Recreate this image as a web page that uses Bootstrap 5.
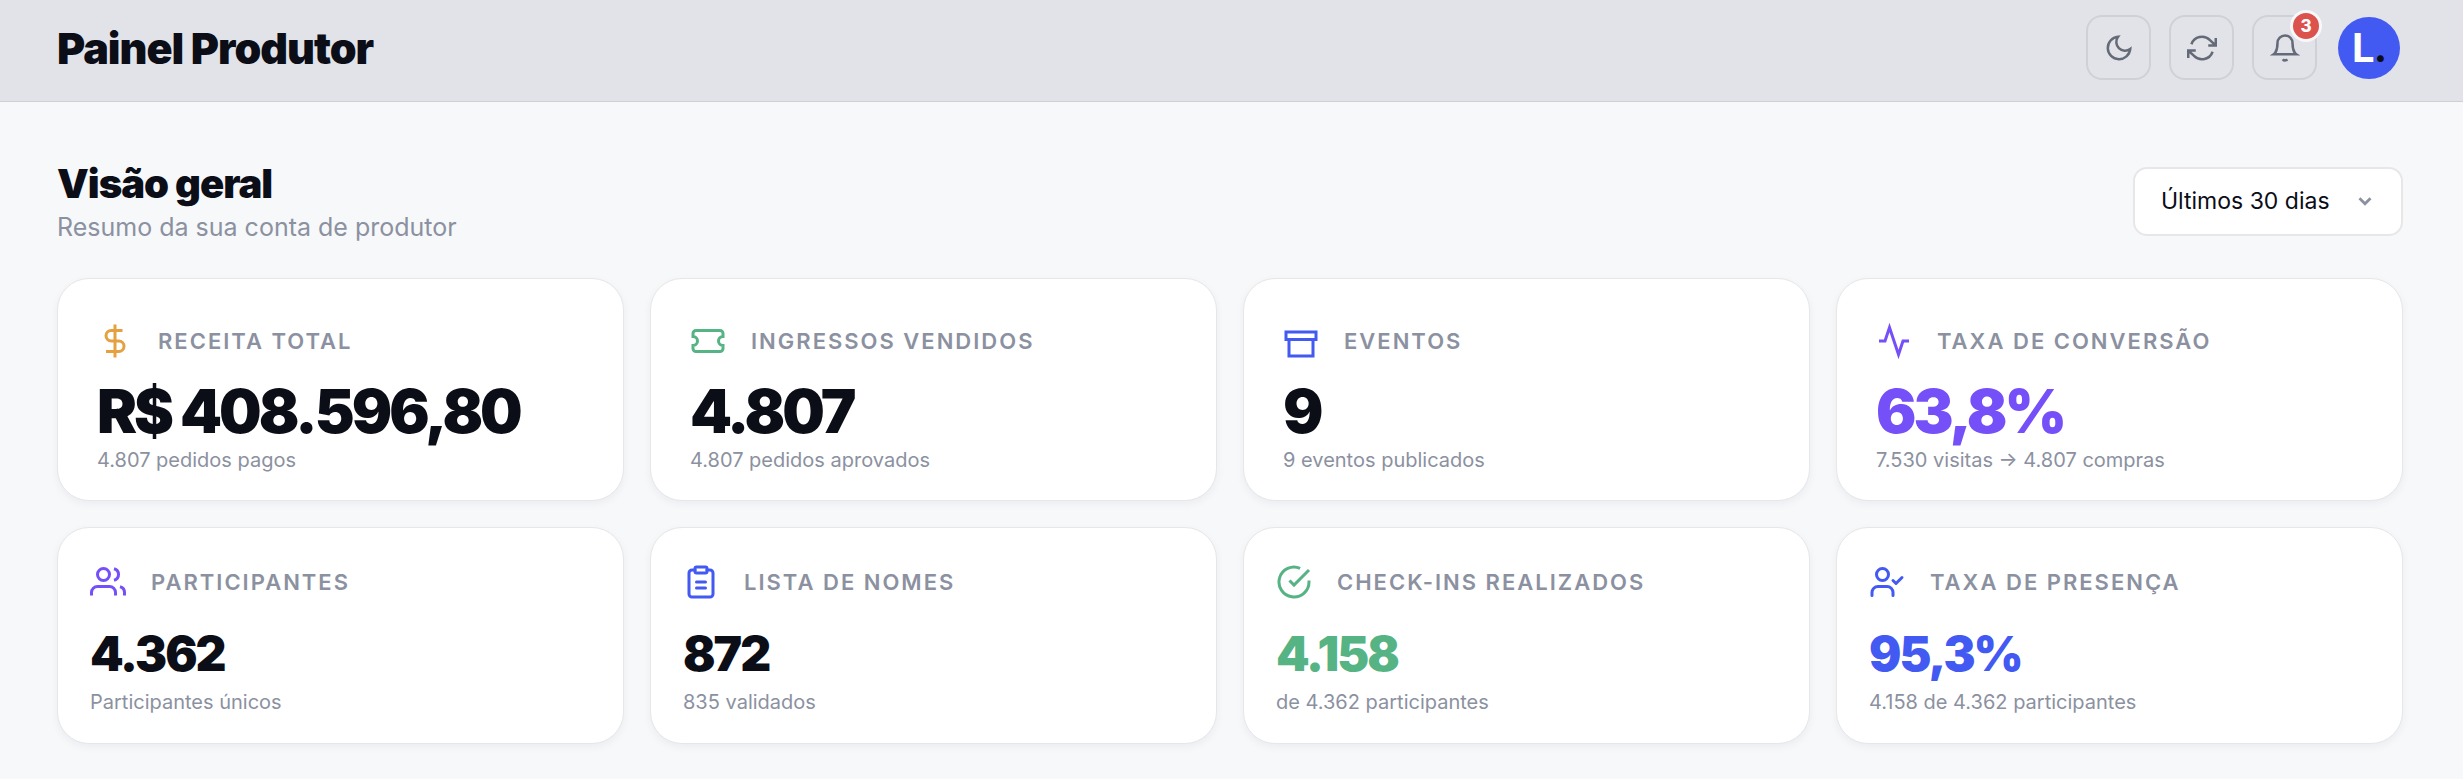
<!DOCTYPE html>
<html lang="pt-BR">
<head>
<meta charset="utf-8">
<meta name="viewport" content="width=device-width, initial-scale=1">
<title>Painel Produtor</title>
<link href="https://cdn.jsdelivr.net/npm/bootstrap@5.3.0/dist/css/bootstrap.min.css" rel="stylesheet">
<style>
:root{--ink:#0b0d17;--muted-ink:#8b91a0;--brand:#4259f2;--violet:#754ff7;--green:#56b384;--amber:#e5a03f}
body{font-family:Inter,"Liberation Sans",sans-serif;background:#f7f8fa;color:var(--ink)}
.topbar{background:#e2e3e8;border-bottom:1px solid #cfd0d5;padding:15px 63px 21px 57px}
h1,h2,.stat-value{font-weight:900;letter-spacing:-1px}
h1{font-size:43px;line-height:50px}
h2{font-size:40px;line-height:52px}
.subtitle{font-size:25px;line-height:34px;color:var(--muted-ink)}
.tool-group{gap:18px}
.tool-btn{width:65px;height:65px;border:2px solid #d0d1d6;border-radius:16px;color:#646a78;padding:0}
.tool-btn:hover{border-color:#b9bac2;color:#3d4250}
.tool-btn svg{width:30px;height:30px}
svg{fill:none;stroke:currentColor;stroke-width:2}
.count-badge{top:-7px;right:-7px;width:32px;height:32px;border:3px solid #f7f8fa;background:#dc524c;color:#fff;font-size:17px;font-weight:800;line-height:26px}
.avatar{width:62px;height:62px;background:var(--brand);color:#fff;font-size:40px;font-weight:700;letter-spacing:-1px;margin-left:3px}
.avatar span{color:var(--ink)}
.main-area{padding:56px 60px 26px 57px}
.page-head{margin-bottom:34px}
.period{width:270px;height:69px;border:2px solid #e7e7e9;border-radius:14px;font-size:23px;color:var(--ink);padding:0 60px 0 26px;background-color:#fff;background-image:url("data:image/svg+xml,%3Csvg xmlns='http://www.w3.org/2000/svg' viewBox='0 0 24 24' fill='none' stroke='%238b91a0' stroke-width='3'%3E%3Cpath d='m6 9 6 6 6-6'/%3E%3C/svg%3E");background-size:22px;background-position:right 25px center}
.stats{--bs-gutter-x:26px;--bs-gutter-y:26px}
.stat{border:1px solid #e6e7ea;border-radius:32px;background:#fff;box-shadow:0 3px 8px rgba(20,24,40,.05)}
.stat-head{gap:25px}
.stat-head svg{width:36px;height:36px;flex:none}
.stat-label{font-size:22px;line-height:36px;font-weight:600;letter-spacing:2px;color:var(--muted-ink);text-transform:uppercase}
.stat-note{font-size:20px;line-height:30px;color:var(--muted-ink)}
.stat-lg{padding:44px 39px 25px}
.stat-lg .stat-value{font-size:60px;line-height:64px;letter-spacing:-3px;margin:20px 0 2px}
.stat-sm{padding:36px 32px 26px}
.stat-sm .stat-value{font-size:48px;line-height:48px;letter-spacing:-2px;margin:30px 0 9px}
.tone-amber{color:var(--amber)}.tone-green{color:var(--green)}.tone-brand{color:var(--brand)}.tone-violet{color:var(--violet)}
</style>
</head>
<body>
<header class="topbar d-flex align-items-center justify-content-between">
  <h1 class="mb-0">Painel Produtor</h1>
  <div class="tool-group d-flex align-items-center">
    <button type="button" class="btn tool-btn d-flex align-items-center justify-content-center" aria-label="Alternar tema"><svg viewBox="0 0 24 24"><path d="M21 12.79A9 9 0 1 1 11.21 3 7 7 0 0 0 21 12.79z"/></svg></button>
    <button type="button" class="btn tool-btn d-flex align-items-center justify-content-center" aria-label="Atualizar"><svg viewBox="0 0 24 24"><path d="M23 4v6h-6M1 20v-6h6M3.51 9a9 9 0 0 1 14.85-3.36L23 10M1 14l4.64 4.36A9 9 0 0 0 20.49 15"/></svg></button>
    <button type="button" class="btn tool-btn position-relative d-flex align-items-center justify-content-center" aria-label="Notificações"><svg viewBox="0 0 24 24"><path d="M18 8A6 6 0 0 0 6 8c0 7-3 9-3 9h18s-3-2-3-9M13.73 21a2 2 0 0 1-3.46 0"/></svg><span class="count-badge position-absolute rounded-circle text-center">3</span></button>
    <a href="#" class="avatar rounded-circle d-flex align-items-center justify-content-center text-decoration-none" aria-label="Conta">L<span>.</span></a>
  </div>
</header>
<main class="main-area">
  <div class="page-head d-flex flex-wrap align-items-center justify-content-between">
    <div>
      <h2 class="mb-0">Visão geral</h2>
      <p class="subtitle mb-0">Resumo da sua conta de produtor</p>
    </div>
    <select class="form-select period" aria-label="Período"><option>Últimos 30 dias</option></select>
  </div>
  <div class="row stats">
    <div class="col-12 col-md-6 col-xl-3"><section class="stat stat-lg h-100">
      <div class="stat-head d-flex align-items-center"><svg class="tone-amber" viewBox="0 0 24 24"><path d="M12 1v22M17 5H9.500a3.500 3.500 0 0 0 0 7h5a3.500 3.500 0 0 1 0 7H6"/></svg><span class="stat-label">Receita total</span></div>
      <div class="stat-value">R$ 408.596,80</div><div class="stat-note">4.807 pedidos pagos</div>
    </section></div>
    <div class="col-12 col-md-6 col-xl-3"><section class="stat stat-lg h-100">
      <div class="stat-head d-flex align-items-center"><svg class="tone-green" viewBox="0 0 24 24"><path d="M2 9a3 3 0 0 1 0 6v2a2 2 0 0 0 2 2h16a2 2 0 0 0 2-2v-2a3 3 0 0 1 0-6V7a2 2 0 0 0-2-2H4a2 2 0 0 0-2 2z"/></svg><span class="stat-label">Ingressos vendidos</span></div>
      <div class="stat-value">4.807</div><div class="stat-note">4.807 pedidos aprovados</div>
    </section></div>
    <div class="col-12 col-md-6 col-xl-3"><section class="stat stat-lg h-100">
      <div class="stat-head d-flex align-items-center"><svg class="tone-brand" viewBox="0 0 24 24"><path d="M2 6h20v5H2zM4 11v11h16V11"/></svg><span class="stat-label">Eventos</span></div>
      <div class="stat-value">9</div><div class="stat-note">9 eventos publicados</div>
    </section></div>
    <div class="col-12 col-md-6 col-xl-3"><section class="stat stat-lg h-100">
      <div class="stat-head d-flex align-items-center"><svg class="tone-violet" viewBox="0 0 24 24"><path d="M22 12h-4l-3 9L9 3l-3 9H2"/></svg><span class="stat-label">Taxa de conversão</span></div>
      <div class="stat-value tone-violet">63,8%</div><div class="stat-note">7.530 visitas → 4.807 compras</div>
    </section></div>
    <div class="col-12 col-md-6 col-xl-3"><section class="stat stat-sm h-100">
      <div class="stat-head d-flex align-items-center"><svg class="tone-violet" viewBox="0 0 24 24"><path d="M17 21v-2a4 4 0 0 0-4-4H5a4 4 0 0 0-4 4v2M23 21v-2a4 4 0 0 0-3-3.870M16 3.130a4 4 0 0 1 0 7.750"/><circle cx="9" cy="7" r="4"/></svg><span class="stat-label">Participantes</span></div>
      <div class="stat-value">4.362</div><div class="stat-note">Participantes únicos</div>
    </section></div>
    <div class="col-12 col-md-6 col-xl-3"><section class="stat stat-sm h-100">
      <div class="stat-head d-flex align-items-center"><svg class="tone-brand" viewBox="0 0 24 24" stroke-linecap="round" stroke-linejoin="round"><path d="M16 4h2a2 2 0 0 1 2 2v14a2 2 0 0 1-2 2H6a2 2 0 0 1-2-2V6a2 2 0 0 1 2-2h2M9 12h6M9 16h6"/><rect x="8" y="2" width="8" height="4" rx="1"/></svg><span class="stat-label">Lista de nomes</span></div>
      <div class="stat-value">872</div><div class="stat-note">835 validados</div>
    </section></div>
    <div class="col-12 col-md-6 col-xl-3"><section class="stat stat-sm h-100">
      <div class="stat-head d-flex align-items-center"><svg class="tone-green" viewBox="0 0 24 24"><path d="M22 11.080V12a10 10 0 1 1-5.930-9.140M22 4 12 14.010l-3-3"/></svg><span class="stat-label">Check-ins realizados</span></div>
      <div class="stat-value tone-green">4.158</div><div class="stat-note">de 4.362 participantes</div>
    </section></div>
    <div class="col-12 col-md-6 col-xl-3"><section class="stat stat-sm h-100">
      <div class="stat-head d-flex align-items-center"><svg class="tone-brand" viewBox="0 0 24 24" stroke-linecap="round" stroke-linejoin="round"><path d="M16 21v-2a4 4 0 0 0-4-4H6a4 4 0 0 0-4 4v2M16 11l2 2 4-4"/><circle cx="9" cy="7" r="4"/></svg><span class="stat-label">Taxa de presença</span></div>
      <div class="stat-value tone-brand">95,3%</div><div class="stat-note">4.158 de 4.362 participantes</div>
    </section></div>
  </div>
</main>
<script src="https://cdn.jsdelivr.net/npm/bootstrap@5.3.0/dist/js/bootstrap.bundle.min.js"></script>
</body>
</html>
